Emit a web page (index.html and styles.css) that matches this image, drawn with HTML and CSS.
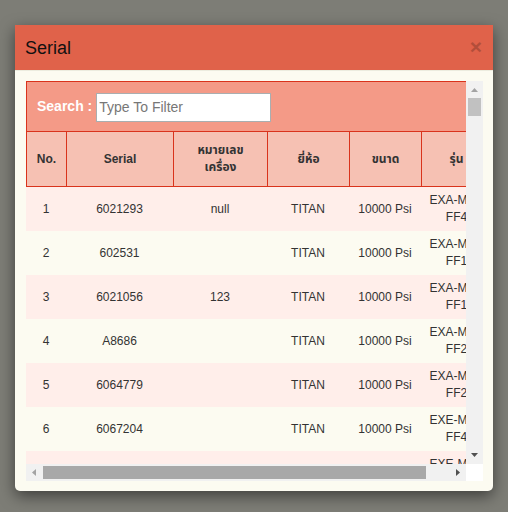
FILE: index.html
```html
<!DOCTYPE html>
<html lang="th">
<head>
<meta charset="utf-8">
<title>Serial</title>
<link rel="stylesheet" href="styles.css">
</head>
<body>
<div class="modal">
  <div class="modal-header">
    <h4 class="modal-title">Serial</h4>
    <span class="close">&times;</span>
  </div>
  <div class="modal-body">
    <div class="scroller">
      <div class="viewport">
        <div class="grid">
          <div class="search-bar">
            <label class="search-label">Search :</label>
            <input class="search-input" type="text" placeholder="Type To Filter">
          </div>
          <div class="row head">
            <div class="cell">No.</div>
            <div class="cell">Serial</div>
            <div class="cell">หมายเลข<br>เครื่อง</div>
            <div class="cell">ยี่ห้อ</div>
            <div class="cell">ขนาด</div>
            <div class="cell last">รุ่น</div>
          </div>
          <div class="row odd">
            <div class="cell">1</div><div class="cell">6021293</div><div class="cell">null</div><div class="cell">TITAN</div><div class="cell">10000 Psi</div><div class="cell model">EXA-MAX<br>FF4</div>
          </div>
          <div class="row even">
            <div class="cell">2</div><div class="cell">602531</div><div class="cell"></div><div class="cell">TITAN</div><div class="cell">10000 Psi</div><div class="cell model">EXA-MAX<br>FF1</div>
          </div>
          <div class="row odd">
            <div class="cell">3</div><div class="cell">6021056</div><div class="cell">123</div><div class="cell">TITAN</div><div class="cell">10000 Psi</div><div class="cell model">EXA-MAX<br>FF1</div>
          </div>
          <div class="row even">
            <div class="cell">4</div><div class="cell">A8686</div><div class="cell"></div><div class="cell">TITAN</div><div class="cell">10000 Psi</div><div class="cell model">EXA-MAX<br>FF2</div>
          </div>
          <div class="row odd">
            <div class="cell">5</div><div class="cell">6064779</div><div class="cell"></div><div class="cell">TITAN</div><div class="cell">10000 Psi</div><div class="cell model">EXA-MAX<br>FF2</div>
          </div>
          <div class="row even">
            <div class="cell">6</div><div class="cell">6067204</div><div class="cell"></div><div class="cell">TITAN</div><div class="cell">10000 Psi</div><div class="cell model">EXE-MAX<br>FF4</div>
          </div>
          <div class="row odd">
            <div class="cell">7</div><div class="cell">6067210</div><div class="cell"></div><div class="cell">TITAN</div><div class="cell">10000 Psi</div><div class="cell model">EXE-MAX<br>FF4</div>
          </div>
        </div>
      </div>
      <div class="vbar">
        <svg class="arrow" width="17" height="17" viewBox="0 0 17 17"><polygon points="5,11 12,11 8.5,7" fill="#a3a3a3"/></svg>
        <div class="vtrack"><div class="vthumb"></div></div>
        <svg class="arrow" width="17" height="17" viewBox="0 0 17 17"><polygon points="5,6 12,6 8.5,10" fill="#505050"/></svg>
      </div>
      <div class="hbar">
        <svg class="arrow" width="17" height="17" viewBox="0 0 17 17"><polygon points="10,5 10,12 6,8.5" fill="#a3a3a3"/></svg>
        <div class="htrack"><div class="hthumb"></div></div>
        <svg class="arrow" width="17" height="17" viewBox="0 0 17 17"><polygon points="7,5 7,12 11,8.5" fill="#505050"/></svg>
      </div>
      <div class="corner"></div>
    </div>
  </div>
</div>
</body>
</html>
```
FILE: styles.css
```css
* { box-sizing: border-box; }
html, body { margin: 0; padding: 0; }
body {
  background: #7d7d76;
  width: 508px;
  height: 512px;
  overflow: hidden;
  font-family: "Liberation Sans", Arial, "Noto Sans Thai", Tahoma, sans-serif;
  font-size: 12px;
  line-height: 17px;
  color: #333;
  padding: 25px 15px 0 15px;
}
.modal {
  width: 478px;
  height: 466px;
  background: #fcfbf1;
  border-radius: 0 0 5px 5px;
  box-shadow: 0 5px 15px rgba(0,0,0,0.5);
  display: flex;
  flex-direction: column;
}
.modal-header {
  height: 46px;
  background: #e0624a;
  border-bottom: 1px solid #ececdf;
  display: flex;
  align-items: center;
  justify-content: space-between;
  padding: 0 11px 0 10px;
}
.modal-title {
  margin: 0;
  font-size: 18px;
  font-weight: normal;
  color: #111;
  line-height: 20px;
}
.close {
  font-size: 21px;
  font-weight: bold;
  line-height: 1;
  color: #000;
  opacity: 0.2;
  margin-top: -2px;
}
.modal-body {
  padding: 10px 10px 10px 11px;
}
.scroller {
  display: grid;
  grid-template-columns: 440px 17px;
  grid-template-rows: 383px 17px;
  background: #f1f1f1;
}
.viewport {
  overflow: hidden;
  background: #fcfbf1;
}
.grid { width: 466px; }
.search-bar {
  height: 50px;
  background: #f49a87;
  border: 1px solid #d9331c;
  border-bottom: none;
  display: flex;
  align-items: center;
  padding-left: 10px;
}
.search-label {
  color: #fff;
  font-weight: bold;
  font-size: 14px;
  margin-right: 4px;
}
.search-input {
  width: 175px;
  height: 29px;
  border: 1px solid #a9aeb0;
  background: #fff;
  font-family: "Liberation Sans", Arial, sans-serif;
  font-size: 14px;
  padding: 0 2px;
  margin-top: 1px;
  outline: none;
}
.search-input::placeholder { color: #777; }
.row {
  display: grid;
  grid-template-columns: 40px 107px 94px 82px 72px 71px;
  height: 44px;
}
.row.head { height: 56px; background: #f6c1b3; }
.row.odd { background: #ffeeea; }
.row.even { background: #fcfbf1; }
.cell {
  display: flex;
  align-items: center;
  justify-content: center;
  text-align: center;
  padding: 5px;
  white-space: nowrap;
}
.head .cell {
  font-weight: bold;
  border-left: 1px solid #d9331c;
  border-top: 1px solid #d9331c;
  border-bottom: 1px solid #d9331c;
}
.head .cell.last { border-right: 1px solid #d9331c; }
.vbar {
  display: flex;
  flex-direction: column;
  background: #f1f1f1;
}
.vtrack { flex: 1; padding: 0 2px; }
.vthumb { height: 18px; background: #c1c1c1; }
.hbar {
  display: flex;
  background: #f1f1f1;
}
.htrack { flex: 1; padding: 2px 0; }
.hthumb { width: 383px; height: 13px; background: #a8a8a8; }
.arrow { display: block; flex: none; }
.corner { background: #fff; }
```
